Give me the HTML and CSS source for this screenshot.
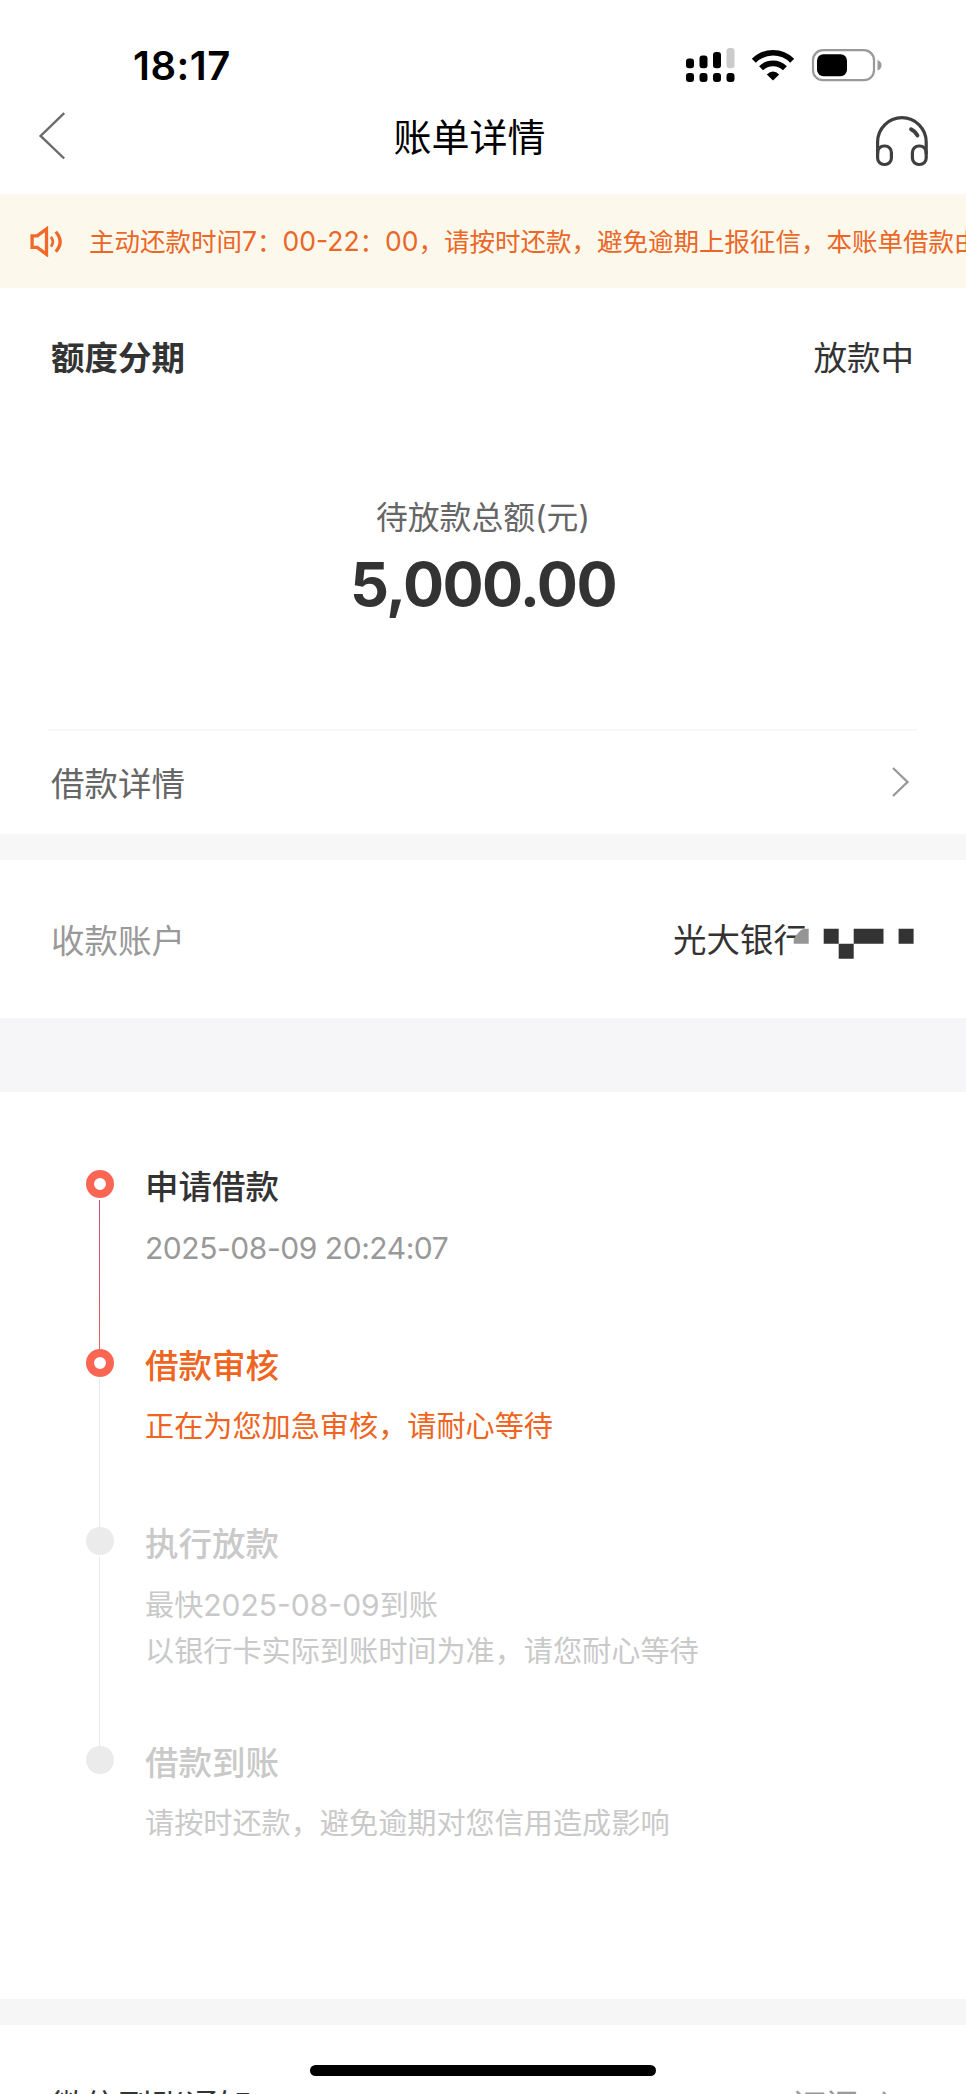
FILE: index.html
```html
<!DOCTYPE html>
<html lang="zh-CN">
<head>
<meta charset="utf-8">
<title>账单详情</title>
<link rel="stylesheet" href="styles.css">
</head>
<body>
<div class="screen">
  <header class="status">
    <span class="clock">18:17</span>
    <svg class="status-icons" width="200" height="40" viewBox="0 0 200 40">
      <g fill="#000">
        <rect x="3" y="14.5" width="8" height="9.8" rx="3"/>
        <rect x="16.5" y="11.5" width="8" height="12.8" rx="3"/>
        <rect x="30" y="8" width="8" height="16.3" rx="3"/>
        <rect x="43.5" y="4" width="8" height="20.3" rx="3" fill="#cbcbcb"/>
        <rect x="3" y="29" width="8" height="9" rx="3"/>
        <rect x="16.5" y="29" width="8" height="9" rx="3"/>
        <rect x="30" y="29" width="8" height="9" rx="3"/>
        <rect x="43.5" y="29" width="8" height="9" rx="3"/>
        <path d="M90 36.5 L83.8 30.4 Q90 24.6 96.2 30.4 Z"/>
      </g>
      <g fill="none" stroke="#000" stroke-width="5.6">
        <path d="M70.8 16.8 A27 27 0 0 1 109.2 16.8"/>
        <path d="M78.1 24.2 A17 17 0 0 1 101.9 24.2"/>
      </g>
      <rect x="130" y="6.2" width="61" height="30" rx="10" fill="none" stroke="#999" stroke-width="2.2"/>
      <rect x="134" y="10.2" width="30" height="22" rx="6.5"/>
      <path d="M194.5 16 Q198.5 17.5 198.5 21.2 Q198.5 25 194.5 26.5 Z" fill="#999"/>
    </svg>
  </header>
  <nav class="nav">
    <svg width="30" height="50" viewBox="0 0 30 50" fill="none" stroke="#6b6b6b" stroke-width="2.4"><path d="M26.2 2.2 L2.6 24.9 L26.2 47.5"/></svg>
    <h1>账单详情</h1>
    <svg class="headset" width="54" height="52" viewBox="0 0 54 52" fill="none" stroke="#3f3f3f" stroke-width="3.2">
      <path d="M2.6 38 V26 A24.3 24.3 0 0 1 51.2 26 V38"/>
      <rect x="2.6" y="30" width="13.8" height="18.5" rx="6.5"/>
      <rect x="37.4" y="30" width="13.8" height="18.5" rx="6.5"/>
      <path d="M36 13.2 Q40 15 42.5 19.5" stroke-width="3.8" stroke-linecap="round"/>
    </svg>
  </nav>
  <div class="notice">
    <svg width="35" height="31" viewBox="0 0 34 30" fill="none" stroke="#f0682a" stroke-width="3.2">
      <path d="M3 9.5 H8 L17 2.8 V27.5 L8 20.8 H3 Z"/>
      <path d="M21.3 10.5 Q25 15.2 21.3 20" stroke-width="2.6"/>
      <path d="M26 5.5 Q34.5 15.2 26 25"/>
    </svg>
    <p>主动还款时间<b>7</b>：<b>00-22</b>：<b>00</b>，请按时还款，避免逾期上报征信，本账单借款由</p>
  </div>
  <section class="summary">
    <div class="summary-head"><strong>额度分期</strong><span>放款中</span></div>
    <div class="total">
      <p class="label">待放款总额(元)</p>
      <p class="amount">5,000.00</p>
    </div>
    <div class="detail">
      <span>借款详情</span>
      <svg width="20" height="32" viewBox="0 0 20 32" fill="none" stroke="#999" stroke-width="2.3"><path d="M2 3 L16.5 17 L2 31"/></svg>
    </div>
  </section>
  <section class="account">
    <span class="account-label">收款账户</span>
    <span class="bank">光大银行
      <svg class="mask" width="130" height="54" viewBox="0 0 130 54">
        <path d="M17 11 Q6 18 3 27 L2 30 V54 H130 V0 H21 Z" fill="#fff"/>
        <path d="M3.7 27.7 V23 Q8 15 14 12.7 H18.7 V27.7 Z" fill="#959595"/>
        <path d="M33.7 12.7h15v15h-15z M48.7 27.7h15v15h-15z M63.7 12.7h29.8v15h-29.8z M108.6 12.7h15v15h-15z" fill="#333"/>
      </svg>
    </span>
  </section>
  <ol class="timeline">
    <li class="step done">
      <div class="rail"><i class="dot"></i><i class="line"></i></div>
      <div class="copy"><h2>申请借款</h2><p class="date">2025-08-09 20:24:07</p></div>
    </li>
    <li class="step current">
      <div class="rail"><i class="dot"></i><i class="line"></i></div>
      <div class="copy"><h2>借款审核</h2><p>正在为您加急审核，请耐心等待</p></div>
    </li>
    <li class="step tall">
      <div class="rail"><i class="dot"></i><i class="line"></i></div>
      <div class="copy"><h2>执行放款</h2><p>最快<b>2025-08-09</b>到账</p><p>以银行卡实际到账时间为准，请您耐心等待</p></div>
    </li>
    <li class="step">
      <div class="rail"><i class="dot"></i></div>
      <div class="copy"><h2>借款到账</h2><p>请按时还款，避免逾期对您信用造成影响</p></div>
    </li>
  </ol>
  <section class="subscribe">
    <span>微信到账通知</span>
    <span class="action">订阅
      <svg width="20" height="32" viewBox="0 0 20 32" fill="none" stroke="#999" stroke-width="2.3"><path d="M2 2 L16.5 16 L2 30"/></svg>
    </span>
  </section>
  <div class="home-bar"></div>
</div>
</body>
</html>
```

FILE: styles.css
```css
* { box-sizing: border-box; margin: 0; padding: 0; }
body {
  background: #fff;
  color: #333;
  font-family: Inter, "Noto Sans CJK SC", sans-serif;
  font-size: 33.5px;
  overflow: hidden;
}
svg { display: block; flex: none; }
b { font-weight: 400; }
.screen {
  position: relative;
  width: 966px;
  height: 2094px;
  overflow: hidden;
  display: flex;
  flex-direction: column;
}
.screen > * { flex: none; }
.status {
  height: 100px;
  padding: 44px 83px 0 133px;
  display: flex;
  justify-content: space-between;
  color: #000;
}
.clock { font-size: 40px; font-weight: 600; line-height: 44px; letter-spacing: 0.5px; }
.nav {
  height: 94px;
  padding: 11px 37px 0 38px;
  display: grid;
  grid-template-columns: 30px 1fr 54px;
  align-items: start;
}
.nav h1 {
  color: #000;
  font-size: 38px;
  font-weight: 400;
  line-height: 50px;
  text-align: center;
  padding: 1px 4px 0 0;
}
.headset { margin-top: 5px; }
.notice {
  height: 94px;
  padding-left: 29px;
  display: flex;
  align-items: center;
  gap: 25px;
  background: #fdf8ec;
  color: #ea6727;
  font-size: 25.5px;
  white-space: nowrap;
  overflow: hidden;
}
.notice p { padding-bottom: 3px; }
.notice b { font-size: 26.5px; }
.summary { height: 546px; padding: 0 48px; }
.summary-head {
  height: 138px;
  padding: 0 4px 4px 3px;
  display: flex;
  justify-content: space-between;
  align-items: center;
}
.summary-head strong { font-weight: 700; }
.total { height: 303px; padding-top: 69px; text-align: center; }
.label { color: #666; font-size: 31.8px; line-height: 46px; }
.amount { font-size: 61px; font-weight: 700; line-height: 87px; letter-spacing: -1.6px; }
.detail {
  height: 105px;
  border-top: 2px solid #f8f8f8;
  padding: 0 7px 3px 3px;
  display: flex;
  justify-content: space-between;
  align-items: center;
  color: #666;
}
.account {
  height: 184px;
  border-top: 26px solid #f7f7f8;
  padding: 0 52px 0 51px;
  display: flex;
  justify-content: space-between;
  align-items: center;
}
.account-label { color: #999; padding-bottom: 2px; }
.bank { position: relative; width: 241px; line-height: 54px; padding-top: 2px; white-space: nowrap; }
.mask { position: absolute; left: 117px; top: 5px; }
.timeline {
  height: 981px;
  border-top: 74px solid #f6f6f8;
  padding: 71px 0 0 85.5px;
  list-style: none;
}
.step {
  min-height: 178.5px;
  display: grid;
  grid-template-columns: 28px 1fr;
  column-gap: 31.5px;
  color: #c9c9c9;
}
.tall { min-height: 218.5px; }
.rail { display: flex; flex-direction: column; padding-top: 7px; }
.dot { width: 28px; height: 28px; border-radius: 50%; background: #ebebeb; flex: none; }
.line { width: 1px; flex: 1; margin: 2px 0 -7px 13.5px; background: #e8e8e8; }
.done .dot, .current .dot { background: #fff; border: 8.5px solid #fb6553; }
.done .line { background: linear-gradient(#cb4a75, #e0625c); }
.copy { padding-top: 1px; }
.copy h2 { font-size: 33.5px; font-weight: 500; line-height: 46px; margin-bottom: 15px; }
.copy p { font-size: 29.15px; line-height: 46px; }
.copy b { font-size: 30px; }
.done h2 { color: #333; }
.done .date { color: #999; font-size: 30px; letter-spacing: -0.45px; }
.current { color: #ee6420; }
.subscribe {
  height: 95px;
  border-top: 26px solid #f6f6f6;
  padding: 54px 65px 0 51px;
  display: flex;
  justify-content: space-between;
  align-items: flex-start;
  line-height: 54px;
  overflow: hidden;
}
.action { display: flex; align-items: center; gap: 22px; color: #999; }
.home-bar {
  position: absolute;
  left: 310px;
  top: 2065px;
  width: 346px;
  height: 11px;
  border-radius: 6px;
  background: #000;
}
```
